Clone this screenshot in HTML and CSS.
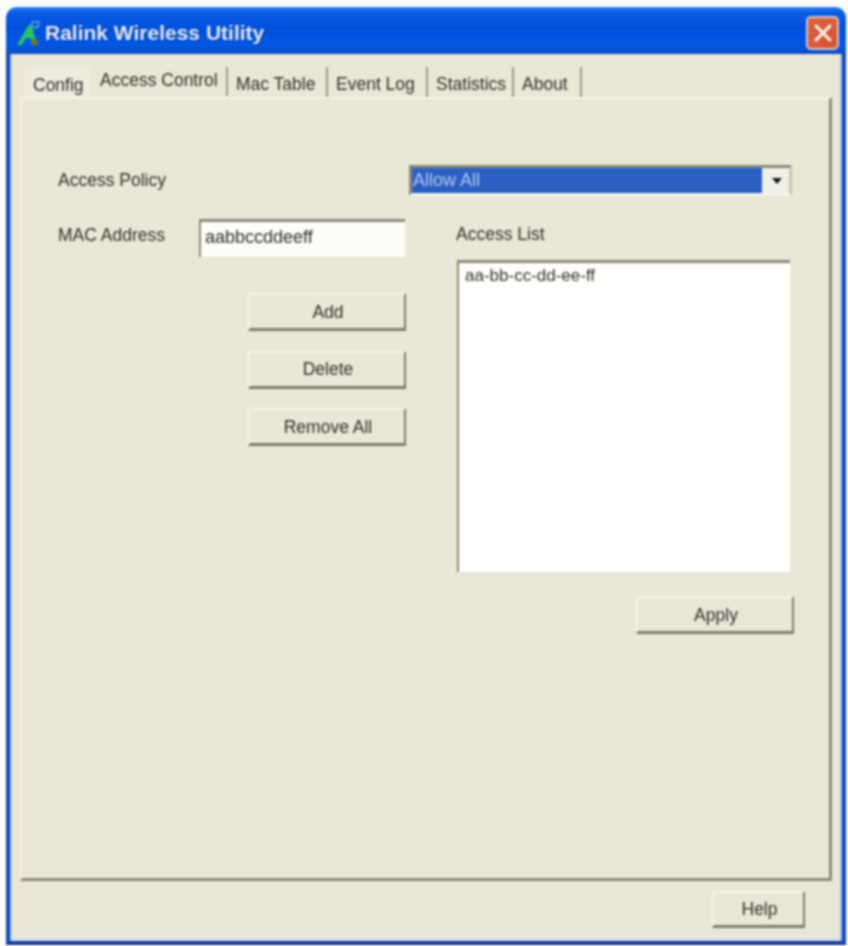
FILE: index.html
```html
<!DOCTYPE html>
<html lang="en">
<head>
  <meta charset="UTF-8">
  <title>Ralink Wireless Utility</title>
  <link rel="stylesheet" href="styles.css">
</head>
<body>

  <div class="window">
    <div class="titlebar">
      <svg class="app-icon" viewBox="0 0 24 26" width="24" height="26">
        <path d="M12 6 L15 1 L23 1 L22 8 L16 9 L15 6 Z" fill="#3f8ee8"/>
        <path d="M16 3 L20 3 L20 6 L16 6 Z" fill="#0a4fc4"/>
        <path d="M11 6 L15 6 L20 25 L15 25 L13.5 18 L9 18 L5 25 L0 25 Z" fill="#25c468"/>
        <path d="M14.5 19 L20 19 L21 25 L15 25 Z" fill="#6f7a20"/>
      </svg>
      <span class="title">Ralink Wireless Utility</span>
      <button class="close-btn">
        <svg viewBox="0 0 20 20" width="26" height="26">
          <path d="M4 4 L16 16 M16 4 L4 16" stroke="#fbeee4" stroke-width="2.4" fill="none"/>
        </svg>
      </button>
    </div>

    <div class="client">
      <div class="tabs">
        <div class="tab tab-config">Config</div>
        <div class="tab tab-active">Access Control</div>
        <div class="tab tab-wide">Mac Table</div>
        <div class="tab tab-wide">Event Log</div>
        <div class="tab tab-stats">Statistics</div>
        <div class="tab tab-about">About</div>
      </div>

      <div class="panel">
        <div class="policy-row">
          <label class="policy-label">Access Policy</label>
          <div class="select">
            <div class="select-value">Allow All</div>
            <div class="select-arrow"></div>
          </div>
        </div>

        <div class="columns">
          <div class="left-col">
            <div class="mac-row">
              <label class="mac-label">MAC Address</label>
              <div class="text-input">aabbccddeeff</div>
            </div>
            <div class="actions">
              <button class="btn">Add</button>
              <button class="btn">Delete</button>
              <button class="btn">Remove All</button>
            </div>
          </div>

          <div class="right-col">
            <label class="list-label">Access List</label>
            <div class="list-box">aa-bb-cc-dd-ee-ff</div>
            <button class="btn apply-btn">Apply</button>
          </div>
        </div>
      </div>

      <div class="footer">
        <button class="btn help-btn">Help</button>
      </div>
    </div>
  </div>

</body>
</html>
```

FILE: styles.css
```css
* {
  box-sizing: border-box;
}

body {
  margin: 0;
  padding: 7px 2px 1px 6px;
  height: 946px;
  background: #fbfcfa;
  font-family: "Liberation Sans", Arial, sans-serif;
  font-size: 17.5px;
  color: #2e2e28;
  overflow: hidden;
}

.window {
  display: flex;
  flex-direction: column;
  width: 840px;
  height: 938px;
  filter: blur(0.8px);
}

.titlebar {
  display: flex;
  align-items: center;
  height: 47px;
  padding: 4px 7px 0 11px;
  border-radius: 11px 11px 0 0;
  background: linear-gradient(#2a80ee 0, #0a5ce4 12%, #0050dc 45%, #0458e4 80%, #0a4cc0 100%);
}

.app-icon {
  margin-right: 4px;
}

.title {
  flex: 1;
  font-size: 21px;
  font-weight: bold;
  color: #e4ecfa;
  text-shadow: 1px 1px 1px #0a3a90;
}

.close-btn {
  display: flex;
  align-items: center;
  justify-content: center;
  width: 33px;
  height: 34px;
  padding: 0;
  border: 2px solid #d8c8cc;
  border-radius: 5px;
  background: radial-gradient(circle at 70% 70%, #d8502c, #d8654a);
}

.client {
  flex: 1;
  display: flex;
  flex-direction: column;
  padding: 13px 10px 13px 10px;
  background: #e9e7d6;
  border-left: 4px solid #0f47b8;
  border-right: 4px solid #0f47b8;
  border-bottom: 4px solid #12399c;
  box-shadow: inset 2px 0 0 #a8c4f4, inset -2px 0 0 #a8c4f4, inset 0 -4px 0 #dfe3ea;
}

.tabs {
  display: flex;
  height: 30px;
  padding-left: 4px;
}

.tab {
  height: 30px;
  padding: 5px 0 0 8px;
  border-right: 2px solid #9a9884;
  white-space: nowrap;
  line-height: 24px;
}

.tab-config {
  width: 66px;
  padding: 6px 0 0 9px;
  border-right: none;
  background: #eeecdf;
}

.tab-active {
  width: 138px;
  height: 29px;
  padding: 1px 0 0 10px;
}

.tab-wide {
  width: 100px;
}

.tab-stats {
  width: 86px;
}

.tab-about {
  width: 68px;
}

.panel {
  flex: 1;
  padding: 66px 35px 0 36px;
  border-top: 2px solid #f6f4e9;
  border-left: 2px solid #f6f2e4;
  border-right: 3px solid #8e8c78;
  border-bottom: 3px solid #8e8c78;
}

.policy-row {
  display: flex;
  align-items: center;
  justify-content: space-between;
  height: 31px;
}

.select {
  display: flex;
  width: 383px;
  height: 31px;
  margin-right: 2px;
  border: 3px solid #8c8a78;
  border-right-color: #c8c6b4;
  border-bottom-color: #f4f4ea;
  background: #f1f0e6;
}

.select-value {
  flex: 1;
  padding-left: 1px;
  background: #2a5fc4;
  color: #b4cbee;
  font-size: 18px;
  line-height: 25px;
}

.select-arrow {
  position: relative;
  width: 27px;
}

.select-arrow::after {
  content: "";
  position: absolute;
  left: 10px;
  top: 10px;
  border-top: 6px solid #111;
  border-left: 5px solid transparent;
  border-right: 5px solid transparent;
}

.columns {
  display: flex;
  gap: 50px;
  margin-top: 23px;
}

.left-col {
  width: 348px;
}

.mac-row {
  display: flex;
  align-items: center;
}

.mac-label {
  width: 141px;
  margin-top: -6px;
}

.text-input {
  width: 206px;
  height: 38px;
  padding: 3px 0 0 4px;
  border-top: 3px solid #8c8a78;
  border-left: 2px solid #8c8a78;
  background: #fcfcf9;
  font-size: 18px;
  line-height: 24px;
}

.actions {
  display: flex;
  flex-direction: column;
  align-items: flex-end;
  gap: 19.5px;
  margin-top: 36px;
}

.btn {
  width: 158px;
  height: 38px;
  padding: 1px 0 0 2px;
  border: none;
  border-top: 2px solid #f4f3e9;
  border-left: 2px solid #f4f3e9;
  border-right: 2px solid #7e7c68;
  border-bottom: 3px solid #7e7c68;
  background: #e9e7d6;
  font-family: inherit;
  font-size: 17.5px;
  color: #2e2e28;
}

.right-col {
  display: flex;
  flex-direction: column;
  align-items: flex-start;
  width: 338px;
}

.list-label {
  height: 41px;
  line-height: 30px;
}

.list-box {
  width: 333px;
  height: 312px;
  margin-left: 1px;
  padding: 1px 0 0 6px;
  border-top: 3px solid #8c8a78;
  border-left: 2px solid #8c8a78;
  background: #fefefc;
  font-size: 17px;
  line-height: 24px;
}

.apply-btn {
  align-self: flex-end;
  margin-top: 24px;
}

.footer {
  display: flex;
  justify-content: flex-end;
  padding: 10px 27px 0 0;
}

.help-btn {
  width: 93px;
  height: 37px;
}
```
